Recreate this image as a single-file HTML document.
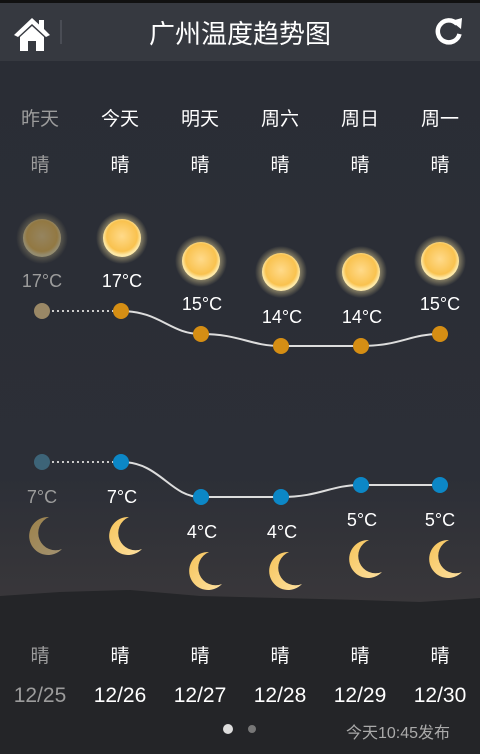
<!DOCTYPE html>
<html><head><meta charset="utf-8"><style>
body{margin:0;width:480px;height:754px;overflow:hidden;font-family:"Liberation Sans","Noto Sans CJK SC",sans-serif;background:#2b2e36;position:relative}
.bg{position:absolute;left:0;top:60px;width:480px;height:694px;background:linear-gradient(#2a2d35 0%,#2c2f37 60%,#39373a 78%,#3b3738 85%)}
.hdr{position:absolute;left:0;top:0;width:480px;height:58px;background:#363940;border-top:3px solid #111}
.t{position:absolute;color:#fff;text-align:center;width:80px;font-size:19px}
.g{color:#9c9c9c}
svg{position:absolute;left:0;top:0}
</style></head><body>
<div class="bg"></div>
<svg width="480" height="754">
<defs>
<radialGradient id="sun" cx="50%" cy="45%" r="50%"><stop offset="0" stop-color="#ffda8a"/><stop offset="0.8" stop-color="#f9c24f"/><stop offset="1" stop-color="#fde9a8"/></radialGradient>
<radialGradient id="glow"><stop offset="0.6" stop-color="#ffe9a0" stop-opacity="0.6"/><stop offset="1" stop-color="#ffe9a0" stop-opacity="0"/></radialGradient>
<linearGradient id="moon" x1="0" y1="0" x2="1" y2="1"><stop offset="0" stop-color="#f6c45a"/><stop offset="1" stop-color="#fde0a0"/></linearGradient>
<g id="s"><circle r="26" fill="url(#glow)"/><circle r="19" fill="url(#sun)"/></g>
<path id="m" d="M4 -19 A19 19 0 1 0 17 13 A16 16 0 0 1 4 -19Z" fill="url(#moon)"/>
</defs>
<path d="M0 596 L60 592 L130 590 L200 596 L280 598 L360 600 L420 602 L480 598 L480 754 L0 754Z" fill="#242528"/>
<g opacity="0.5"><use href="#s" x="42" y="238"/></g>
<use href="#s" x="122" y="238"/><use href="#s" x="201" y="261"/><use href="#s" x="281" y="272"/><use href="#s" x="361" y="272"/><use href="#s" x="440" y="261"/>
<line x1="42" y1="311" x2="121" y2="311" stroke="#ccc" stroke-width="2" stroke-dasharray="2 3"/>
<path d="M121 311 C160 311,170 334,201 334 C240 334,250 346,281 346 C320 346,330 346,361 346 C400 346,410 334,440 334" stroke="#ddd" stroke-width="2" fill="none"/>
<circle cx="42" cy="311" r="8" fill="#9a8866"/>
<g fill="#d58e14"><circle cx="121" cy="311" r="8"/><circle cx="201" cy="334" r="8"/><circle cx="281" cy="346" r="8"/><circle cx="361" cy="346" r="8"/><circle cx="440" cy="334" r="8"/></g>
<line x1="42" y1="462" x2="121" y2="462" stroke="#ccc" stroke-width="2" stroke-dasharray="2 3"/>
<path d="M121 462 C160 462,170 497,201 497 C240 497,250 497,281 497 C320 497,330 485,361 485 C400 485,410 485,440 485" stroke="#ddd" stroke-width="2" fill="none"/>
<circle cx="42" cy="462" r="8" fill="#3d6478"/>
<g fill="#0c87c6"><circle cx="121" cy="462" r="8"/><circle cx="201" cy="497" r="8"/><circle cx="281" cy="497" r="8"/><circle cx="361" cy="485" r="8"/><circle cx="440" cy="485" r="8"/></g>
<g opacity="0.55"><use href="#m" x="45" y="536"/></g>
<use href="#m" x="125" y="536"/><use href="#m" x="205" y="571"/><use href="#m" x="285" y="571"/><use href="#m" x="365" y="559"/><use href="#m" x="445" y="559"/>
<circle cx="228" cy="729" r="5" fill="#ddd"/><circle cx="252" cy="729" r="4" fill="#777"/>
</svg>
<div class="hdr">
<svg width="40" height="40" style="left:12px;top:12px" viewBox="0 0 40 40"><path d="M2 20 L20 3 L27 9.5 L27 5 L32 5 L32 14 L38 20 L34 22 L20 9 L6 22Z M8 22 L20 11 L32 22 L32 36 L24 36 L24 26 L16 26 L16 36 L8 36Z" fill="#fff"/></svg>
<div style="position:absolute;left:60px;top:17px;width:2px;height:24px;background:#4a4d55"></div>
<div style="position:absolute;left:0;width:480px;top:11px;text-align:center;color:#fff;font-size:26px">广州温度趋势图</div>
<svg width="30" height="30" style="left:434px;top:13px" viewBox="0 0 30 30"><path d="M23 8 A11 11 0 1 0 25.5 18" stroke="#fff" stroke-width="4.5" fill="none"/><path d="M17 5 L28 2 L27 13Z" fill="#fff"/></svg>
</div>
<div class="t g" style="left:0;top:104px">昨天</div><div class="t" style="left:80px;top:104px">今天</div><div class="t" style="left:160px;top:104px">明天</div><div class="t" style="left:240px;top:104px">周六</div><div class="t" style="left:320px;top:104px">周日</div><div class="t" style="left:400px;top:104px">周一</div>
<div class="t g" style="left:0;top:150px">晴</div><div class="t" style="left:80px;top:150px">晴</div><div class="t" style="left:160px;top:150px">晴</div><div class="t" style="left:240px;top:150px">晴</div><div class="t" style="left:320px;top:150px">晴</div><div class="t" style="left:400px;top:150px">晴</div>
<div class="t g" style="left:2px;top:271px;font-size:18px">17°C</div><div class="t" style="left:82px;top:271px;font-size:18px">17°C</div><div class="t" style="left:162px;top:294px;font-size:18px">15°C</div><div class="t" style="left:242px;top:307px;font-size:18px">14°C</div><div class="t" style="left:322px;top:307px;font-size:18px">14°C</div><div class="t" style="left:400px;top:294px;font-size:18px">15°C</div>
<div class="t g" style="left:2px;top:487px;font-size:18px">7°C</div><div class="t" style="left:82px;top:487px;font-size:18px">7°C</div><div class="t" style="left:162px;top:522px;font-size:18px">4°C</div><div class="t" style="left:242px;top:522px;font-size:18px">4°C</div><div class="t" style="left:322px;top:510px;font-size:18px">5°C</div><div class="t" style="left:400px;top:510px;font-size:18px">5°C</div>
<div class="t g" style="left:0;top:641px">晴</div><div class="t" style="left:80px;top:641px">晴</div><div class="t" style="left:160px;top:641px">晴</div><div class="t" style="left:240px;top:641px">晴</div><div class="t" style="left:320px;top:641px">晴</div><div class="t" style="left:400px;top:641px">晴</div>
<div class="t g" style="left:0;top:684px;font-size:21px">12/25</div><div class="t" style="left:80px;top:684px;font-size:21px">12/26</div><div class="t" style="left:160px;top:684px;font-size:21px">12/27</div><div class="t" style="left:240px;top:684px;font-size:21px">12/28</div><div class="t" style="left:320px;top:684px;font-size:21px">12/29</div><div class="t" style="left:400px;top:684px;font-size:21px">12/30</div>
<div style="position:absolute;left:346px;top:719px;color:#aaa;font-size:16px">今天10:45发布</div>
</body></html>
